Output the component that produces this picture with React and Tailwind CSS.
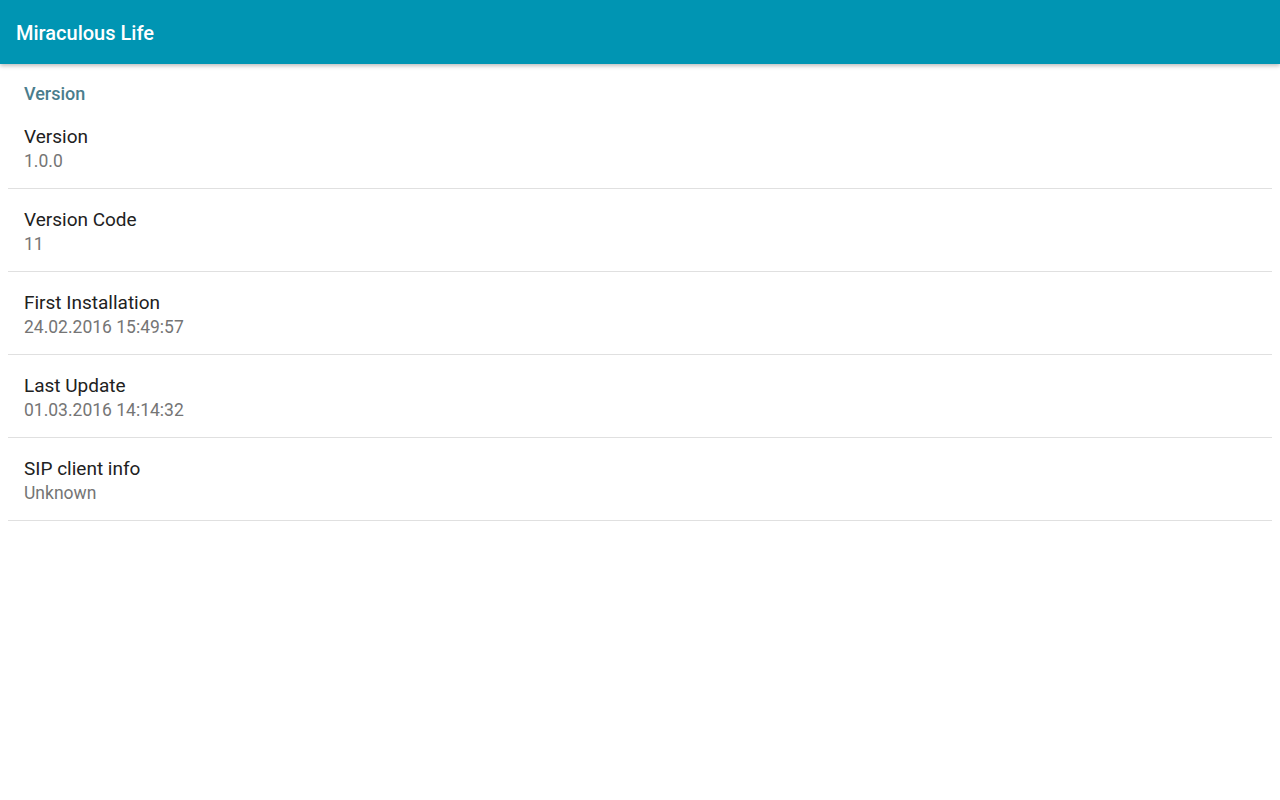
const rows = [
  { title: 'Version', value: '1.0.0' },
  { title: 'Version Code', value: '11' },
  { title: 'First Installation', value: '24.02.2016 15:49:57' },
  { title: 'Last Update', value: '01.03.2016 14:14:32' },
  { title: 'SIP client info', value: 'Unknown' },
]

export default function App() {
  return (
    <div className="min-h-[800px] bg-white" style={{ fontFamily: 'Roboto, "Noto Sans", sans-serif' }}>
      <header className="relative z-10 h-16 bg-[#0095b3] flex items-center px-4 pt-[2px] shadow-[0_2px_4px_rgba(0,0,0,0.25)]">
        <h1 className="text-[20px] font-medium text-white">Miraculous Life</h1>
      </header>

      <div className="px-2">
        <div className="px-4 pt-[18px] text-[18px] leading-6 font-medium text-[#4a7d8c]">Version</div>
        {rows.map((r) => (
          <div key={r.title} className="px-4 pt-[19px] pb-[15px] border-b border-[#e0e0e0]">
            <div className="text-[19px] leading-6 text-[#212121]">{r.title}</div>
            <div className="mt-[1px] text-[17.5px] leading-[23px] text-[#757575]">{r.value}</div>
          </div>
        ))}
      </div>
    </div>
  )
}
